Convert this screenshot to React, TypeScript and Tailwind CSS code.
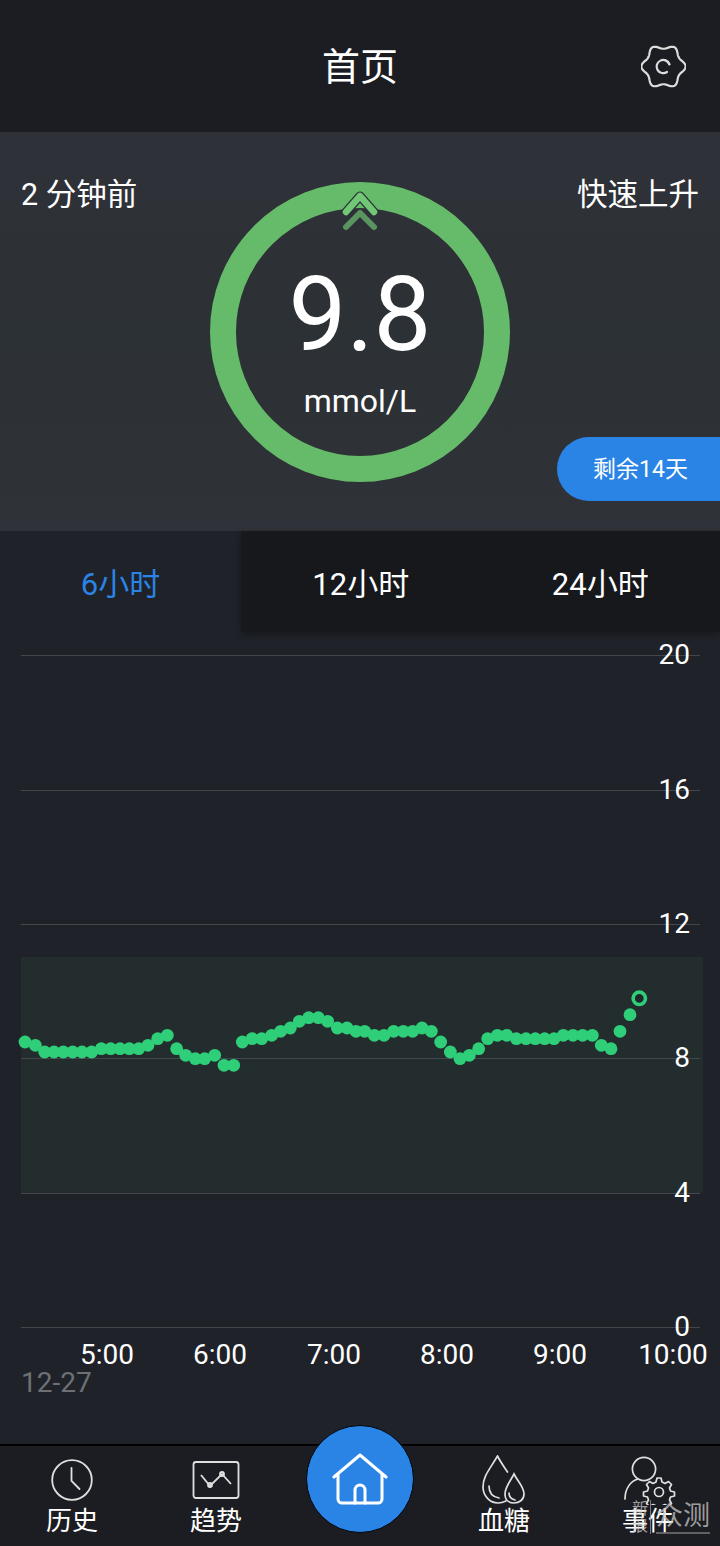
import React from "react";

const leftRaw = [[75,186],[106,196],[134,216],[162,216],[190,216],[218,216],[246,216],[275,216],[304,206],[332,206],[360,206],[388,206],[416,206],[444,196],[473,176],[502,166],[530,206],[557,226],[586,236],[614,236],[644,226],[672,256],[701,256],[727,186],[756,176],[785,176],[815,166],[842,154],[871,144],[898,124],[926,113],[955,113],[983,124],[1012,144],[1041,144],[1068,154]];
const rightRaw = [[14,184],[43,196],[72,196],[101,184],[130,184],[158,184],[186,174],[214,184],[242,216],[271,246],[300,266],[328,256],[356,236],[383,206],[412,196],[440,196],[469,206],[498,206],[526,206],[554,206],[582,206],[610,196],[639,196],[668,196],[697,196],[724,226],[753,236],[780,184],[810,134]];
const dots = [
  ...leftRaw.map(([x, y]) => [x / 3, 980 + y / 3]),
  ...rightRaw.map(([x, y]) => [360 + x / 3, 970 + y / 3]),
];
const grid = [
  [655, "20"],
  [790, "16"],
  [924, "12"],
  [1058, "8"],
  [1193, "4"],
  [1327, "0"],
] as const;
const times = [[107, "5:00"], [220, "6:00"], [334, "7:00"], [447, "8:00"], [560, "9:00"], [673, "10:00"]] as const;

function wavyGear() {
  const pts: string[] = [];
  for (let i = 0; i <= 180; i++) {
    const t = (i / 180) * Math.PI * 2;
    const r = 19.8 + 2.2 * Math.cos(6 * t) + 0.15 * Math.cos(12 * t);
    pts.push(`${(22.5 + r * Math.cos(t)).toFixed(2)},${(22.5 + r * Math.sin(t)).toFixed(2)}`);
  }
  return `M${pts.join("L")}Z`;
}

function Chart() {
  return (
    <svg className="block" width={720} height={812} viewBox="0 632 720 812">
      <rect x={21} y={957} width={682} height={236} fill="#232d2e" />
      {grid.map(([y, label]) => (
        <g key={label}>
          <line x1={21} x2={700} y1={y + 0.5} y2={y + 0.5} stroke="#43474c" strokeWidth={1} />
          <text x={690} y={y + 9} textAnchor="end" fontSize={28} fill="#ffffff">{label}</text>
        </g>
      ))}
      {times.map(([x, label]) => (
        <text key={label} x={x} y={1364} textAnchor="middle" fontSize={28} fill="#ffffff">{label}</text>
      ))}
      <text x={21} y={1392} fontSize={28} fill="#6d7075">12-27</text>
      {dots.map(([x, y], i) => (
        <circle key={i} cx={x} cy={y} r={6.4} fill="#2fce79" />
      ))}
      <circle cx={639.3} cy={998.3} r={6.2} fill="#20282c" stroke="#2fce79" strokeWidth={3.6} />
    </svg>
  );
}

function NavItem({ label, children }: { label: string; children: React.ReactNode }) {
  return (
    <div className="flex flex-col items-center">
      <div className="h-[51px] flex items-center justify-center">{children}</div>
      <div className="text-[26px] leading-[32px] text-white">{label}</div>
    </div>
  );
}

export default function App() {
  return (
    <div className="relative w-[720px] h-[1546px] overflow-hidden bg-[#1f2228] text-white font-[Roboto,'Noto_Sans_CJK_SC',sans-serif]">
      <header className="h-[132px] bg-[#1c1d22] flex items-center justify-center relative">
        <h1 className="text-[38px] leading-[44px] mt-[2px] font-normal">首页</h1>
        <svg className="absolute right-[34px] top-[44px]" width={45} height={45} viewBox="0 0 45 45" fill="none" stroke="#dcdcdc" strokeWidth={2.2} strokeLinecap="round">
          <path d={wavyGear()} strokeLinejoin="round" />
          <path d="M28.4 20.3A6.6 6.6 0 1 0 26 28" />
          <path d="M24.4 16.2a6.6 6.6 0 0 1 4 4.1" />
        </svg>
      </header>

      <section className="h-[399px] pt-[45px] pb-[30px] grid grid-cols-[210px_300px_210px] bg-linear-to-b from-[#2f3138] via-[#2c3135] to-[#2f3238]">
        <div className="pl-[21px] text-[30.500px] leading-[36px]">2 分钟前</div>
        <div className="pt-[5px]">
          <div className="relative w-[300px] h-[300px] rounded-full border-[26px] border-[#66bb6a] flex flex-col items-center">
            <svg className="absolute left-[106px] top-[-20px]" width={36} height={44} viewBox="0 0 36 44" fill="none" strokeLinecap="round" strokeLinejoin="round">
              <path d="M4 39 18 25l14 14" stroke="#5a9560" strokeWidth={6} />
              <path d="M4 24 18 8l14 16" stroke="#2a3035" strokeWidth={9} />
              <path d="M4 24 18 8l14 16" stroke="#72c677" strokeWidth={6.5} />
            </svg>
            <div className="text-[103px] leading-[100px] mt-[57px]">9.8</div>
            <div className="text-[32px] leading-[38px] mt-[17px]">mmol/L</div>
          </div>
        </div>
        <div className="flex flex-col items-end">
          <div className="pr-[21px] text-[30.500px] leading-[36px]">快速上升</div>
          <div className="mt-auto w-[163px] h-[64px] pl-[4px] pt-[2px] rounded-l-full bg-[#2a84e6] flex items-center justify-center text-[23px]">剩余14天</div>
        </div>
      </section>

      <nav className="h-[101px] grid grid-cols-[241px_479px] text-[31px]">
        <div className="flex items-center justify-center pt-[8px] bg-[#1f2229] text-[#2a84e6]">6小时</div>
        <div className="grid grid-cols-2 bg-[#16181c] shadow-[0_2px_6px_rgba(0,0,0,0.3)]">
          <div className="flex items-center justify-center pt-[8px]">12小时</div>
          <div className="flex items-center justify-center pt-[8px]">24小时</div>
        </div>
      </nav>

      <Chart />

      <footer className="h-[102px] border-t-2 border-black bg-[#1c1d22] grid grid-cols-5 pt-[8px]">
        <NavItem label="历史">
          <svg width={42} height={42} viewBox="0 0 42 42" fill="none" stroke="#e0e0e0" strokeWidth={1.8} strokeLinecap="round">
            <circle cx={21} cy={21} r={19.8} />
            <path d="M20.5 9v13l8 8" />
          </svg>
        </NavItem>
        <NavItem label="趋势">
          <svg width={48} height={40} viewBox="0 0 48 40" fill="none" stroke="#e0e0e0" strokeWidth={1.8}>
            <rect x={1.5} y={2} width={45} height={36} rx={2.5} />
            <path d="M9 15l9 11 12-12 9 10" />
            <circle cx={18} cy={25} r={2} />
            <circle cx={30} cy={14} r={2} />
          </svg>
        </NavItem>
        <div className="flex justify-center">
          <div className="mt-[-29px] w-[108px] h-[108px] rounded-full bg-[#2a84e6] border border-black flex items-center justify-center">
            <svg width={56} height={52} viewBox="0 0 56 52" fill="none" stroke="#ffffff" strokeWidth={3} strokeLinejoin="round" strokeLinecap="round">
              <path d="M2 24 28 2l26 22" />
              <path d="M6 22v24a4 4 0 0 0 4 4h36a4 4 0 0 0 4-4V22" />
              <path d="M23 50V37a5 5 0 0 1 10 0v13" />
            </svg>
          </div>
        </div>
        <NavItem label="血糖">
          <svg width={44} height={50} viewBox="0 0 44 50" fill="none" stroke="#e0e0e0" strokeWidth={1.7} strokeLinecap="round">
            <path d="M15.5 1C8 14 1 21 1 32c0 9 7 16 15 16 3 0 6-1 8-2M15.5 1c3 6 6 10 10 16" />
            <path d="M7 31c0 7 4 11 10 12" />
            <path d="M32 19c-4 8-9 13-9 20 0 6 4 9 9 9s10-3 10-9c0-7-6-12-10-20Z" />
            <path d="M27 38c0 4 2 6 6 7" />
          </svg>
        </NavItem>
        <NavItem label="事件">
          <svg className="ml-[4px]" width={58} height={50} viewBox="0 0 58 50" fill="none" stroke="#e0e0e0" strokeWidth={1.7} strokeLinecap="round" strokeLinejoin="round">
            <circle cx={23} cy={14} r={11.6} />
            <path d="M4 44c0-11 6-18 13-20" />
            <path d="M36 23h4l1 4 3 1.500 3.500-2 3 3-2 3.500 1 3 4 1v4l-4 1-1 3 2 3.500-3 3-3.500-2-3 1.200-1 2.800h-4l-1-2.800-3-1.200-3.500 2-3-3 2-3.500-1-3-4-1v-4l4-1 1-3-2-3.500 3-3 3.500 2 3-1.500Z" />
            <circle cx={38} cy={37} r={4.5} />
          </svg>
        </NavItem>
      </footer>

      <div className="absolute left-[632px] top-[1500px] flex items-center text-[#c8c8c8] opacity-75">
        <div className="flex flex-col text-[16px] leading-[17px] w-[17px]">
          <span>新</span>
          <span>浪</span>
        </div>
        <div className="w-px h-[34px] bg-[#9a9a9a] ml-[1px] mr-[5px]" />
        <div className="text-[27px] leading-[32px] border-b-2 border-[#777]">众测</div>
      </div>
    </div>
  );
}
